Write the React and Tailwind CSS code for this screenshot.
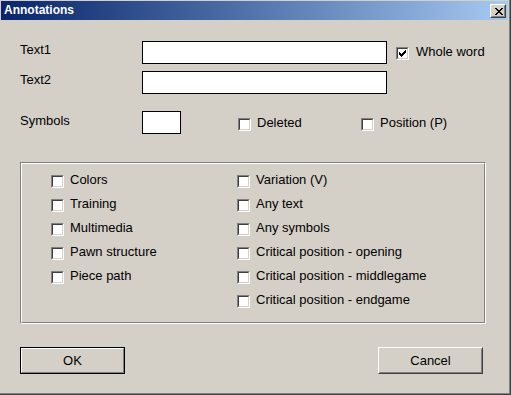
import React from 'react';

const CheckMark = () => (
  <svg width="7" height="7" viewBox="0 0 7 7" shapeRendering="crispEdges" className="block">
    {[2, 3, 4, 3, 2, 1, 0].map((top, x) => (
      <rect key={x} x={x} y={top} width="1" height="3" fill="#000" />
    ))}
  </svg>
);

const CloseGlyph = () => (
  <svg width="8" height="7" viewBox="0 0 8 7" shapeRendering="crispEdges" className="block">
    {[
      [0, 0], [1, 0], [6, 0], [7, 0],
      [1, 1], [2, 1], [5, 1], [6, 1],
      [2, 2], [3, 2], [4, 2], [5, 2],
      [3, 3], [4, 3],
      [2, 4], [3, 4], [4, 4], [5, 4],
      [1, 5], [2, 5], [5, 5], [6, 5],
      [0, 6], [1, 6], [6, 6], [7, 6],
    ].map(([x, y]) => (
      <rect key={`${x}-${y}`} x={x} y={y} width="1" height="1" fill="#000" />
    ))}
  </svg>
);

const CheckBox = ({ checked = false, label, className = '' }) => (
  <div className={`flex items-start gap-[6px] ${className}`}>
    <span className="mt-[3px] w-[13px] h-[13px] shrink-0 border border-t-[#808080] border-l-[#808080] border-b-white border-r-white">
      <span className="flex w-full h-full bg-white border border-t-[#404040] border-l-[#404040] border-b-[#d4d0c8] border-r-[#d4d0c8] pl-[1px] pt-[1px]">
        {checked && <CheckMark />}
      </span>
    </span>
    <span className="whitespace-nowrap">{label}</span>
  </div>
);

const TextBox = ({ className = '' }) => (
  <div className={`h-[23px] bg-white border border-black ${className}`} />
);

const leftItems = ['Colors', 'Training', 'Multimedia', 'Pawn structure', 'Piece path'];
const rightItems = [
  'Variation (V)',
  'Any text',
  'Any symbols',
  'Critical position - opening',
  'Critical position - middlegame',
  'Critical position - endgame',
];

export default function App() {
  return (
    <div className="w-[511px] h-[395px] overflow-hidden bg-[#404040] pr-[1px] pb-[1px] font-['Liberation_Sans',Arial,sans-serif] text-[13px] leading-[15px] text-black">
      <div className="w-full h-full bg-[#d4d0c8] border-r border-b border-[#808080] pt-[1px] pl-[1px]">
        {/* title bar */}
        <div className="w-[507px] h-[19px] flex items-start justify-between bg-linear-to-r from-[#0a246a] to-[#a6caf0]">
          <span className="pl-[3px] pt-[2px] text-[12px] leading-[15px] font-bold text-white">Annotations</span>
          <button className="mt-[3px] mr-[2px] w-[16px] h-[14px] border border-t-white border-l-white border-b-[#404040] border-r-[#404040] bg-[#d4d0c8]">
            <span className="flex w-full h-full items-center justify-center border border-t-[#d4d0c8] border-l-[#d4d0c8] border-b-[#808080] border-r-[#808080] pl-[1px]">
              <CloseGlyph />
            </span>
          </button>
        </div>

        <div className="pl-[19px]">
          {/* Text1 */}
          <div className="mt-[21px] flex items-start">
            <span className="w-[122px] pt-[1px]">Text1</span>
            <TextBox className="w-[245px]" />
            <CheckBox checked label="Whole word" className="ml-[9px] mt-[3px] gap-[7px]" />
          </div>

          {/* Text2 */}
          <div className="mt-[7px] flex items-start">
            <span className="w-[122px] pt-[1px]">Text2</span>
            <TextBox className="w-[245px]" />
          </div>

          {/* Symbols */}
          <div className="mt-[17px] flex items-start">
            <span className="w-[122px] pt-[2px]">Symbols</span>
            <TextBox className="w-[39px]" />
            <CheckBox label="Deleted" className="ml-[57px] mt-[4px] w-[123px]" />
            <CheckBox label="Position (P)" className="mt-[4px]" />
          </div>

          {/* group */}
          <div className="mt-[28px] w-[466px] h-[162px] border border-t-[#808080] border-l-[#808080] border-b-white border-r-white">
            <div className="w-full h-full border border-t-white border-l-white border-b-[#808080] border-r-[#808080] pl-[29px] pt-[8px] flex">
              <div className="w-[186px] flex flex-col">
                {leftItems.map((item) => (
                  <CheckBox key={item} label={item} className="h-[24px]" />
                ))}
              </div>
              <div className="flex flex-col">
                {rightItems.map((item) => (
                  <CheckBox key={item} label={item} className="h-[24px]" />
                ))}
              </div>
            </div>
          </div>

          {/* buttons */}
          <div className="mt-[23px] w-[463px] flex justify-between">
            <button className="w-[105px] h-[27px] border border-black">
              <span className="flex w-full h-full items-center justify-center border border-t-white border-l-white border-b-[#808080] border-r-[#808080]">
                OK
              </span>
            </button>
            <button className="w-[105px] h-[27px] border border-t-white border-l-white border-b-[#404040] border-r-[#404040]">
              <span className="flex w-full h-full items-center justify-center border border-t-[#d4d0c8] border-l-[#d4d0c8] border-b-[#808080] border-r-[#808080]">
                Cancel
              </span>
            </button>
          </div>
        </div>
      </div>
    </div>
  );
}
